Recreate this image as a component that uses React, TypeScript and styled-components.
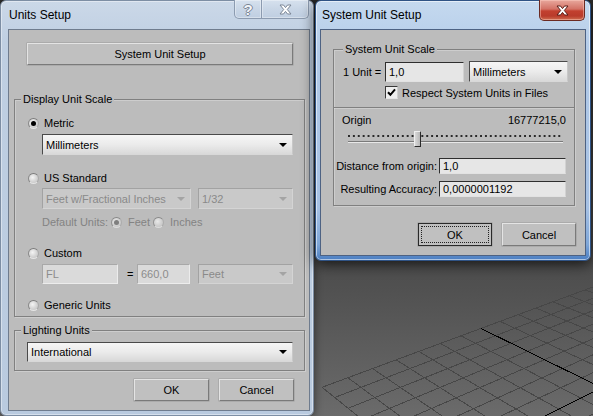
import React from "react";
import styled, { createGlobalStyle, css } from "styled-components";

const GlobalStyle = createGlobalStyle`
  html, body { margin: 0; padding: 0; background: #202020; }
  * { box-sizing: border-box; }
`;

const FONT = `"Liberation Sans", Arial, sans-serif`;

/* ---------- desktop / viewport ---------- */

const Desktop = styled.div`
  position: relative;
  width: 593px;
  height: 416px;
  overflow: hidden;
  background: linear-gradient(to bottom, #2c2c2c 0px, #505050 285px, #6b6b6b 416px);
  font-family: ${FONT};
  font-size: 11px;
  color: #000;
`;

const GridLayer = styled.svg`
  position: absolute;
  left: 0;
  top: 0;
`;

const A = [322, 387.3];
const V1 = [-120, 33];
const V2 = [1435, -25];
const B = 0.0238;
const C = -0.0279;
function proj(u: number, v: number): [number, number] {
  const d = 1 + B * u + C * v;
  return [
    (A[0] + B * u * V2[0] + C * v * V1[0]) / d,
    (A[1] + B * u * V2[1] + C * v * V1[1]) / d,
  ];
}

function ViewportGrid() {
  const N = 14;
  const lines: React.ReactElement[] = [];
  for (let i = 0; i <= N; i++) {
    if (i === 7) continue;
    const [x1, y1] = proj(i, 0);
    const [x2, y2] = proj(i, N);
    lines.push(<line key={"u" + i} x1={x1} y1={y1} x2={x2} y2={y2} />);
    const [a1, b1] = proj(0, i);
    const [a2, b2] = proj(N, i);
    lines.push(<line key={"v" + i} x1={a1} y1={b1} x2={a2} y2={b2} />);
  }
  const [ux1, uy1] = proj(7, 0);
  const [ux2, uy2] = proj(7, N);
  const [vx1, vy1] = proj(0, 7);
  const [vx2, vy2] = proj(N, 7);
  return (
    <GridLayer width={593} height={416} viewBox="0 0 593 416">
      <g stroke="#474747" strokeWidth={1} shapeRendering="crispEdges">{lines}</g>
      <g stroke="#000" strokeWidth={1} shapeRendering="crispEdges">
        <line x1={ux1} y1={uy1} x2={ux2} y2={uy2} />
        <line x1={vx1} y1={vy1} x2={vx2} y2={vy2} />
      </g>
    </GridLayer>
  );
}

/* ---------- window chrome ---------- */

const WindowFrame = styled.div<{
  $x: number; $w: number; $h: number; $active?: boolean; $pad: string;
}>`
  position: absolute;
  left: ${(p) => p.$x}px;
  top: 0;
  width: ${(p) => p.$w}px;
  height: ${(p) => p.$h}px;
  display: flex;
  flex-direction: column;
  padding: ${(p) => p.$pad};
  border-radius: 6px;
  ${(p) =>
    p.$active
      ? css`
          border: 1px solid #2f5385;
          background: linear-gradient(to bottom, #c5d9ef 0%, #b3cbe8 20%, #a6c1e4 80%, #7ea6d8 94%, #4b7ec2 100%);
          box-shadow: inset 0 0 0 1px rgba(255, 255, 255, 0.55), 0 3px 14px rgba(0, 0, 0, 0.75);
        `
      : css`
          border: 1px solid #7d8ea4;
          background: linear-gradient(to bottom, #cbd8e8 0%, #bfcfe2 10%, #b9cadf 100%);
          box-shadow: inset 0 0 0 1px rgba(255, 255, 255, 0.4), 0 2px 8px rgba(0, 0, 0, 0.5);
        `}
`;

const TitleBar = styled.div<{ $pl: number }>`
  height: 28px;
  flex: none;
  display: flex;
  justify-content: space-between;
  align-items: flex-start;
  padding-left: ${(p) => p.$pl}px;
`;

const Title = styled.span`
  font-family: ${FONT};
  font-size: 12px;
  line-height: 28px;
  color: #000;
`;

const CaptionGroup = styled.div`
  display: flex;
  margin-top: -1px;
  margin-right: 1px;
`;

const CaptionButton = styled.div<{ $w: number; $h: number; $variant: "inactive" | "close" }>`
  width: ${(p) => p.$w}px;
  height: ${(p) => p.$h}px;
  display: flex;
  align-items: center;
  justify-content: center;
  font-family: ${FONT};
  font-weight: bold;
  font-size: 14px;
  ${(p) =>
    p.$variant === "close"
      ? css`
          border: 1px solid #6b2a22;
          border-top: none;
          border-radius: 0 0 5px 5px;
          background: linear-gradient(to bottom, #e8a89d 0%, #d37266 45%, #c2402f 55%, #b93b2b 80%, #cf6d50 100%);
          box-shadow: inset 0 0 0 1px rgba(255, 210, 200, 0.45);
        `
      : css`
          border: 1px solid #8c9bb0;
          border-top: none;
          background: linear-gradient(to bottom, #d6e1ee 0%, #c9d6e6 50%, #bfcee1 100%);
          box-shadow: inset 0 0 0 1px rgba(255, 255, 255, 0.35);
          & + & { border-left: none; }
          &:first-child { border-radius: 0 0 0 5px; }
          &:last-child { border-radius: 0 0 5px 0; }
        `}
`;

const HelpGlyph = styled.span`
  color: #f2f5f9;
  font-size: 15px;
  line-height: 1;
  text-shadow: -1px 0 #7a8595, 1px 0 #7a8595, 0 -1px #7a8595, 0 1px #7a8595;
`;

function CloseGlyph({ dark }: { dark: string }) {
  return (
    <svg width="13" height="11" viewBox="0 0 13 11">
      <path
        d="M1 1 H4.5 L6.5 3.6 L8.5 1 H12 L8.3 5.5 L12 10 H8.5 L6.5 7.4 L4.5 10 H1 L4.7 5.5 Z"
        fill="#fff"
        stroke={dark}
        strokeWidth={1}
        strokeLinejoin="round"
      />
    </svg>
  );
}

const Client = styled.div<{ $active?: boolean }>`
  flex: 1;
  display: flex;
  flex-direction: column;
  background: #bcbcbc;
  border: 1px solid ${(p) => (p.$active ? "#4d6283" : "#6f7c8e")};
`;

/* ---------- controls ---------- */

type Spacing = { $mt?: number; $ml?: number };
const spacing = css<Spacing>`
  margin-top: ${(p) => p.$mt ?? 0}px;
  margin-left: ${(p) => p.$ml ?? 0}px;
`;

const PushButton = styled.div<Spacing & { $w: number; $h: number; $focus?: boolean }>`
  ${spacing};
  flex: none;
  position: relative;
  width: ${(p) => p.$w}px;
  height: ${(p) => p.$h}px;
  display: flex;
  align-items: center;
  justify-content: center;
  background: #c0c0c0;
  border: 1px solid;
  border-color: #e4e4e4 #7a7a7a #7a7a7a #e4e4e4;
  box-shadow: 0 0 0 0.5px #9a9a9a;
  color: #000;
  ${(p) =>
    p.$focus &&
    css`
      border-color: #2a2a2a;
      &::after {
        content: "";
        position: absolute;
        inset: 2px;
        border: 1px dotted #222;
      }
    `}
`;

const GroupBox = styled.div<Spacing & { $w: number; $pb: number }>`
  ${spacing};
  flex: none;
  position: relative;
  width: ${(p) => p.$w}px;
  display: flex;
  flex-direction: column;
  padding-bottom: ${(p) => p.$pb}px;
  border: 1px solid #808080;
  box-shadow: inset 1px 1px 0 rgba(255, 255, 255, 0.25), 1px 1px 0 rgba(255, 255, 255, 0.25);
`;

const Legend = styled.span<{ $left: number }>`
  position: absolute;
  top: -8px;
  left: ${(p) => p.$left}px;
  padding: 0 2px;
  line-height: 14px;
  background: #bcbcbc;
  white-space: nowrap;
`;

const Row = styled.div<Spacing & { $h: number }>`
  ${spacing};
  flex: none;
  height: ${(p) => p.$h}px;
  display: flex;
  align-items: center;
`;

const Label = styled.span<{ $ml?: number; $disabled?: boolean; $w?: number }>`
  margin-left: ${(p) => p.$ml ?? 0}px;
  white-space: nowrap;
  color: ${(p) => (p.$disabled ? "#838383" : "#000")};
  ${(p) => p.$w && css`width: ${p.$w}px; flex: none;`}
`;

const RadioDot = styled.span<{ $checked?: boolean; $disabled?: boolean; $ml?: number }>`
  flex: none;
  position: relative;
  width: 11px;
  height: 11px;
  margin-left: ${(p) => p.$ml ?? 0}px;
  border-radius: 50%;
  border: 1px solid;
  border-color: #7c7c7c #a9a9a9 #e4e4e4 #8a8a8a;
  background: radial-gradient(circle at 40% 38%, #f4f4f4 0%, #d9d9d9 45%, #bdbdbd 100%);
  ${(p) =>
    p.$checked &&
    css`
      &::after {
        content: "";
        position: absolute;
        left: 2px;
        top: 2px;
        width: 5px;
        height: 5px;
        border-radius: 50%;
        background: ${p.$disabled ? "#707070" : "#000"};
      }
    `}
  ${(p) => p.$disabled && css`opacity: 0.8;`}
`;

const Dropdown = styled.div<Spacing & { $w: number; $h: number; $disabled?: boolean }>`
  ${spacing};
  flex: none;
  width: ${(p) => p.$w}px;
  height: ${(p) => p.$h}px;
  display: flex;
  align-items: center;
  justify-content: space-between;
  padding: 0 5px 0 3px;
  border: 1px solid;
  ${(p) =>
    p.$disabled
      ? css`
          border-color: #a2a2a2 #d4d4d4 #d4d4d4 #a2a2a2;
          background: #c9c9c9;
          color: #8a8a8a;
        `
      : css`
          border-color: #4a4a4a #c8c8c8 #d8d8d8 #4a4a4a;
          background: linear-gradient(to bottom, #f6f6f6 0%, #ebebeb 50%, #d9d9d9 100%);
          color: #000;
        `}
`;

const Arrow = styled.span<{ $disabled?: boolean }>`
  width: 0;
  height: 0;
  border-left: 4px solid transparent;
  border-right: 4px solid transparent;
  border-top: 4px solid ${(p) => (p.$disabled ? "#a4a4a4" : "#000")};
`;

const TextField = styled.div<Spacing & { $w: number; $h: number; $disabled?: boolean }>`
  ${spacing};
  flex: none;
  width: ${(p) => p.$w}px;
  height: ${(p) => p.$h}px;
  display: flex;
  align-items: center;
  padding-left: 3px;
  border: 1px solid;
  ${(p) =>
    p.$disabled
      ? css`
          border-color: #a8a8a8 #ececec #ececec #a8a8a8;
          background: #dadada;
          color: #8c8c8c;
        `
      : css`
          border-color: #2e2e2e #d2d2d2 #e2e2e2 #2e2e2e;
          background: #e6e6e6;
          color: #000;
        `}
`;

const CheckBox = styled.span`
  flex: none;
  width: 13px;
  height: 13px;
  display: flex;
  align-items: center;
  justify-content: center;
  border: 1px solid;
  border-color: #3a3a3a #d0d0d0 #e6e6e6 #3a3a3a;
  background: #efefef;
`;

const ButtonRow = styled.div<{ $mt: number; $pr: number; $gap: number }>`
  flex: none;
  display: flex;
  justify-content: flex-end;
  gap: ${(p) => p.$gap}px;
  margin-top: ${(p) => p.$mt}px;
  padding-right: ${(p) => p.$pr}px;
`;

const Separator = styled.div<{ $mt: number }>`
  flex: none;
  height: 1px;
  margin-top: ${(p) => p.$mt}px;
  background: #808080;
  box-shadow: 0 1px 0 rgba(255, 255, 255, 0.25);
`;

const SpreadRow = styled.div<{ $mt: number; $pad: number }>`
  flex: none;
  height: 14px;
  margin-top: ${(p) => p.$mt}px;
  padding: 0 ${(p) => p.$pad}px;
  display: flex;
  align-items: center;
  justify-content: space-between;
`;

const FieldRow = styled.div<{ $mt: number }>`
  flex: none;
  margin-top: ${(p) => p.$mt}px;
  display: grid;
  grid-template-columns: 103px 127px;
  column-gap: 2px;
  align-items: center;
  & > span { text-align: right; }
`;

const Slider = styled.div<{ $mt: number; $ml: number; $w: number }>`
  flex: none;
  position: relative;
  width: ${(p) => p.$w}px;
  height: 16px;
  margin-top: ${(p) => p.$mt}px;
  margin-left: ${(p) => p.$ml}px;
`;

const Ticks = styled.div`
  position: absolute;
  left: 0;
  right: 0;
  top: 4px;
  height: 2px;
  background-image: linear-gradient(to right, #2a2a2a 2px, transparent 2px);
  background-size: 4.9px 2px;
`;

const Track = styled.div`
  position: absolute;
  left: 0;
  right: 0;
  top: 10px;
  height: 2px;
  border-top: 1px solid #7a7a7a;
  border-bottom: 1px solid #e8e8e8;
`;

const Thumb = styled.div<{ $left: number }>`
  position: absolute;
  top: 0;
  left: ${(p) => p.$left}px;
  width: 7px;
  height: 16px;
  border: 1px solid;
  border-color: #f0f0f0 #2a2a2a #2a2a2a #f0f0f0;
  background: linear-gradient(to right, #d8d8d8, #b8b8b8);
  border-radius: 1px 1px 0 0;
`;

/* ---------- dialogs ---------- */

function Radio({ checked, label, mt }: { checked?: boolean; label: string; mt: number }) {
  return (
    <Row $mt={mt} $ml={13} $h={16}>
      <RadioDot $checked={checked} />
      <Label $ml={5}>{label}</Label>
    </Row>
  );
}

function UnitsSetup() {
  return (
    <WindowFrame $x={0} $w={314} $h={416} $pad="0 3px 4px 7px">
      <TitleBar $pl={1}>
        <Title>Units Setup</Title>
        <CaptionGroup>
          <CaptionButton $w={28} $h={19} $variant="inactive">
            <HelpGlyph>?</HelpGlyph>
          </CaptionButton>
          <CaptionButton $w={47} $h={19} $variant="inactive">
            <CloseGlyph dark="#7a8595" />
          </CaptionButton>
        </CaptionGroup>
      </TitleBar>
      <Client>
        <PushButton $mt={13} $ml={18} $w={266} $h={22}>
          System Unit Setup
        </PushButton>

        <GroupBox $mt={34} $ml={5} $w={291} $pb={3}>
          <Legend $left={6}>Display Unit Scale</Legend>
          <Radio checked label="Metric" mt={15} />
          <Dropdown $mt={3} $ml={27} $w={251} $h={21}>
            <span>Millimeters</span>
            <Arrow />
          </Dropdown>
          <Radio label="US Standard" mt={15} />
          <Row $mt={2} $ml={27} $h={21}>
            <Dropdown $w={149} $h={21} $disabled>
              <span>Feet w/Fractional Inches</span>
              <Arrow $disabled />
            </Dropdown>
            <Dropdown $ml={7} $w={95} $h={21} $disabled>
              <span>1/32</span>
              <Arrow $disabled />
            </Dropdown>
          </Row>
          <Row $mt={5} $ml={27} $h={16}>
            <Label $disabled $w={69}>Default Units:</Label>
            <RadioDot $checked $disabled />
            <Label $disabled $ml={6} $w={25}>Feet</Label>
            <RadioDot $disabled />
            <Label $disabled $ml={6}>Inches</Label>
          </Row>
          <Radio label="Custom" mt={15} />
          <Row $mt={3} $ml={27} $h={20}>
            <TextField $w={76} $h={20} $disabled>FL</TextField>
            <Label $ml={9} $w={10}>=</Label>
            <TextField $w={53} $h={20} $disabled>660,0</TextField>
            <Dropdown $ml={8} $w={95} $h={20} $disabled>
              <span>Feet</span>
              <Arrow $disabled />
            </Dropdown>
          </Row>
          <Radio label="Generic Units" mt={13} />
        </GroupBox>

        <GroupBox $mt={13} $ml={5} $w={291} $pb={8}>
          <Legend $left={6}>Lighting Units</Legend>
          <Dropdown $mt={11} $ml={12} $w={266} $h={20}>
            <span>International</span>
            <Arrow />
          </Dropdown>
        </GroupBox>

        <ButtonRow $mt={8} $pr={15} $gap={10}>
          <PushButton $w={75} $h={22}>OK</PushButton>
          <PushButton $w={75} $h={22}>Cancel</PushButton>
        </ButtonRow>
      </Client>
    </WindowFrame>
  );
}

function CheckMark() {
  return (
    <svg width="9" height="9" viewBox="0 0 9 9">
      <path d="M1 4.2 L3.4 6.8 L8 1.4" fill="none" stroke="#000" strokeWidth={2} />
    </svg>
  );
}

function SystemUnitSetup() {
  return (
    <WindowFrame $x={315} $w={276} $h={261} $pad="0 4px 4px 4px" $active>
      <TitleBar $pl={2}>
        <Title>System Unit Setup</Title>
        <CaptionGroup>
          <CaptionButton $w={46} $h={21} $variant="close">
            <CloseGlyph dark="#5a1d16" />
          </CaptionButton>
        </CaptionGroup>
      </TitleBar>
      <Client $active>
        <GroupBox $mt={19} $ml={12} $w={242} $pb={8}>
          <Legend $left={9}>System Unit Scale</Legend>
          <Row $mt={11} $ml={9} $h={21}>
            <Label $w={42}>1 Unit =</Label>
            <TextField $w={79} $h={20}>1,0</TextField>
            <Dropdown $ml={5} $w={99} $h={21}>
              <span>Millimeters</span>
              <Arrow />
            </Dropdown>
          </Row>
          <Row $mt={4} $ml={51} $h={13}>
            <CheckBox>
              <CheckMark />
            </CheckBox>
            <Label $ml={4}>Respect System Units in Files</Label>
          </Row>
          <Separator $mt={8} />
          <SpreadRow $mt={5} $pad={8}>
            <span>Origin</span>
            <span>16777215,0</span>
          </SpreadRow>
          <Slider $mt={4} $ml={14} $w={215}>
            <Ticks />
            <Track />
            <Thumb $left={66} />
          </Slider>
          <FieldRow $mt={11}>
            <span>Distance from origin:</span>
            <TextField $w={127} $h={16}>1,0</TextField>
          </FieldRow>
          <FieldRow $mt={7}>
            <span>Resulting Accuracy:</span>
            <TextField $w={127} $h={16}>0,0000001192</TextField>
          </FieldRow>
        </GroupBox>
        <ButtonRow $mt={17} $pr={9} $gap={10}>
          <PushButton $w={74} $h={23} $focus>OK</PushButton>
          <PushButton $w={74} $h={23}>Cancel</PushButton>
        </ButtonRow>
      </Client>
    </WindowFrame>
  );
}

export default function App() {
  return (
    <>
      <GlobalStyle />
      <Desktop>
        <ViewportGrid />
        <UnitsSetup />
        <SystemUnitSetup />
      </Desktop>
    </>
  );
}
